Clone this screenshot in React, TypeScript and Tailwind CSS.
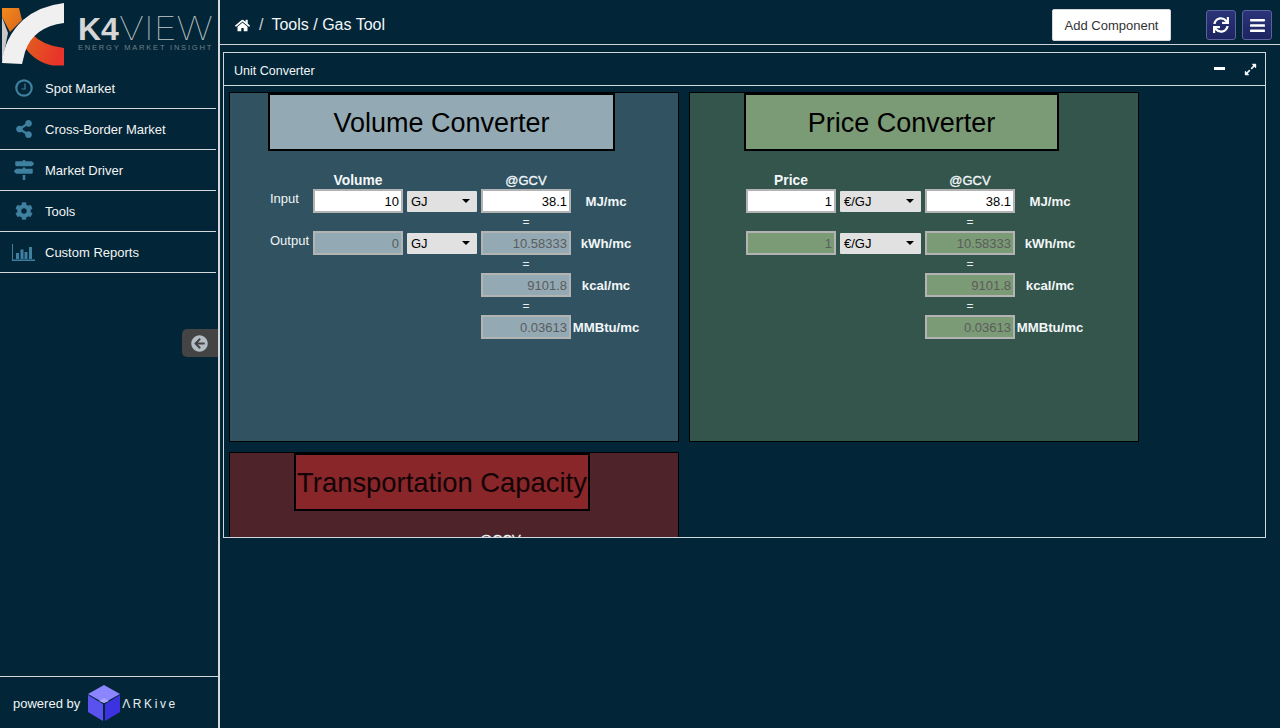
import React from "react";
import { FaHome, FaShareAlt, FaMapSigns, FaCog, FaSync, FaBars, FaExpandAlt, FaArrowCircleLeft } from "react-icons/fa";

const font = "font-['Liberation_Sans',Arial,sans-serif]";

function ClockIcon() {
  return (
    <svg width="18" height="18" viewBox="0 0 18 18" fill="none" stroke="#3f7f9f">
      <circle cx="9" cy="9" r="7.7" strokeWidth="2.2" />
      <path d="M10 4.5 V10 H6.5" strokeWidth="1.2" />
    </svg>
  );
}

function BarIcon() {
  return (
    <svg width="24" height="17" viewBox="0 0 24 17" fill="#3f7f9f">
      <rect x="0" y="0" width="1" height="17" />
      <rect x="0" y="15.5" width="23" height="1.5" />
      <rect x="4" y="9" width="3" height="6" />
      <rect x="8.5" y="5.5" width="3" height="9.5" />
      <rect x="12.5" y="8" width="3" height="7" />
      <rect x="17" y="3" width="3" height="12" />
    </svg>
  );
}

const nav = [
  { label: "Spot Market", icon: <ClockIcon /> },
  { label: "Cross-Border Market", icon: <FaShareAlt size={18} className="text-[#3f7f9f]" /> },
  { label: "Market Driver", icon: <FaMapSigns size={20} className="text-[#3f7f9f]" /> },
  { label: "Tools", icon: <FaCog size={18} className="text-[#3f7f9f]" /> },
  { label: "Custom Reports", icon: <BarIcon /> },
];

function Logo() {
  return (
    <div className="h-[68px] flex items-start">
      <svg width="64" height="66" viewBox="0 0 64 66" className="shrink-0 ml-[1px]">
        <defs>
          <linearGradient id="o1" x1="0" y1="0" x2="1" y2="1">
            <stop offset="0" stopColor="#f28a1c" />
            <stop offset="1" stopColor="#d9641c" />
          </linearGradient>
          <linearGradient id="o2" x1="0" y1="0" x2="1" y2="0.3">
            <stop offset="0" stopColor="#e0641e" />
            <stop offset="1" stopColor="#e8342a" />
          </linearGradient>
        </defs>
        <path d="M1 17 L7 33 L1 63 Z" fill="#c9c9c9" />
        <path d="M1 8 L18 8 L21 20 L9 32 L1 17 Z" fill="url(#o1)" />
        <path d="M30 33 Q42 46 63 48 V65.5 H52 Q32 62 22 44 Z" fill="url(#o2)" />
        <path d="M63 3 V23 Q32 27 24 52 L21 64 L1 63 Q3 38 22 20 Q38 6 63 3 Z" fill="#f0f0f0" />
      </svg>
      <div className="ml-[13px] mt-[16px] flex flex-col">
        <div className="text-[32px] leading-[26px] h-[26px] text-[#d6d6d6] whitespace-nowrap">
          <span className="font-bold">K4</span>
          <span className="inline-block origin-left scale-x-[1.22] font-['Inter',sans-serif] font-thin text-[#c4cacc]">VIEW</span>
        </div>
        <div className="text-[7.5px] leading-[9px] mt-[1px] tracking-[1.8px] text-[#6f7f87] whitespace-nowrap">ENERGY MARKET INSIGHT</div>
      </div>
    </div>
  );
}

function Sidebar() {
  return (
    <aside className="w-[220px] shrink-0 h-full flex flex-col border-r-2 border-[#d4d8da] relative">
      <Logo />
      <nav className="mr-[2px]">
        {nav.map((n) => (
          <div key={n.label} className="h-[41px] flex items-center border-b border-[#d4d8da] text-[#f4f4f4] text-[13px]">
            <span className="w-[45px] pl-[12px] pr-[9px] shrink-0 flex justify-center">{n.icon}</span>
            <span className="pt-[2px]">{n.label}</span>
          </div>
        ))}
      </nav>
      <div className="absolute right-0 top-[329px] w-[36px] h-[28px] bg-[#444444] rounded-l-[5px] flex items-center pl-[9px]">
        <FaArrowCircleLeft size={17} className="text-[#b4bcc4]" />
      </div>
      <div className="mt-auto h-[52px] border-t border-[#d4d8da] flex items-center pl-[13px] text-[13px] text-[#f0f4f6]">
        <span className="pt-[2px]">powered by</span>
        <svg width="34" height="38" viewBox="0 0 34 38" className="ml-[7px] mt-[1px] shrink-0">
          <path d="M17 1 L33 10 L17 19 L1 10 Z" fill="#8b85ff" />
          <path d="M1 11 L16 20 L16 37 L1 28 Z" fill="#5a52ee" />
          <path d="M33 11 L18 20 L18 37 L33 28 Z" fill="#3d32e0" />
          <path d="M17 14 L22 17 L17 19 L12 17 Z" fill="#a9a5ff" />
        </svg>
        <span className="ml-[1px] mt-[3px] text-[12px] tracking-[2.6px] text-[#e8eef2] whitespace-nowrap">ΛRKive</span>
      </div>
    </aside>
  );
}

function Field({ value, on, tone }: { value: string; on?: boolean; tone: string }) {
  return (
    <div className={`h-[24px] w-[90px] shrink-0 border-2 border-[#b3b3b3] flex items-center justify-end pr-[2px] pt-[1px] text-[13px] ${on ? "bg-white text-black" : `${tone} text-[#5c5c5c]`}`}>
      {value}
    </div>
  );
}

function Sel({ value, w }: { value: string; w: string }) {
  return (
    <div className={`h-[21px] ${w} shrink-0 bg-[#e1e1e1] rounded-[1px] flex items-center justify-between pl-[4px] pr-[7px] text-[13px] text-black`}>
      <span className="pt-[1px]">{value}</span>
      <span className="w-0 h-0 border-x-[4px] border-x-transparent border-t-[4px] border-t-black" />
    </div>
  );
}

function Unit({ children }: { children: React.ReactNode }) {
  return <div className="w-[70px] shrink-0 pt-[2px] font-bold text-[13.2px] text-[#f2f6f8] whitespace-nowrap flex justify-center">{children}</div>;
}

function Eq() {
  return <div className="w-[90px] h-[18px] text-center text-[12px] leading-[18px] text-[#e8eef0]">=</div>;
}

function Converter({ head, unit, unitW, spacer, tone, leftLabels, pad }: { head: string; unit: string; unitW: string; spacer: string; tone: string; leftLabels: boolean; pad: string }) {
  return (
    <div className={`flex flex-col mt-[21px] ${pad}`}>
      <div className="flex h-[17px] items-center pt-[2px] font-bold text-[13.8px] text-[#f4f8fa]">
        <div className={`${leftLabels ? "w-[43px]" : "w-0"}`} />
        <div className="w-[90px] text-center">{head}</div>
        <div className={`${unitW} mx-[4px]`} />
        <div className="w-[90px] pb-[2px] text-center font-normal text-[13px] [-webkit-text-stroke:0.3px_#f4f8fa]">@GCV</div>
      </div>
      <div className="flex items-center h-[24px]">
        {leftLabels && <div className="w-[43px] text-[13px] text-[#f0f4f6] pb-[5px]">Input</div>}
        <Field value={head === "Volume" ? "10" : "1"} on tone={tone} />
        <div className="mx-[4px]"><Sel value={unit} w={unitW} /></div>
        <Field value="38.1" on tone={tone} />
        <Unit>MJ/mc</Unit>
      </div>
      <div className="flex h-[18px]">
        <div className={spacer} />
        <Eq />
      </div>
      <div className="flex items-center h-[24px]">
        {leftLabels && <div className="w-[43px] text-[13px] text-[#f0f4f6] pb-[5px] whitespace-nowrap">Output</div>}
        <Field value={head === "Volume" ? "0" : "1"} tone={tone} />
        <div className="mx-[4px]"><Sel value={unit} w={unitW} /></div>
        <Field value="10.58333" tone={tone} />
        <Unit>kWh/mc</Unit>
      </div>
      {[["9101.8", "kcal/mc"], ["0.03613", "MMBtu/mc"]].map(([v, u]) => (
        <React.Fragment key={u}>
          <div className="flex h-[18px]">
            <div className={spacer} />
            <Eq />
          </div>
          <div className="flex items-center h-[24px]">
            <div className={spacer} />
            <Field value={v} tone={tone} />
            <Unit>{u}</Unit>
          </div>
        </React.Fragment>
      ))}
    </div>
  );
}

export default function App() {
  return (
    <div className={`w-[1280px] h-[728px] overflow-hidden bg-[#022637] flex ${font}`}>
      <Sidebar />
      <main className="flex-1 min-w-0 flex flex-col">
        <header className="h-[45px] shrink-0 border-b border-[#cfd4d6] flex items-center pt-[6px] pl-[15px] pr-[8px] text-white">
          <FaHome size={15} />
          <span className="ml-[9px] text-[16px] text-[#d0d4d6]">/</span>
          <span className="ml-[8px] text-[16px] text-[#f2f6f8]">Tools / Gas Tool</span>
          <button className="ml-auto w-[119px] h-[32px] pt-[2px] bg-white rounded-[2px] border border-[#d8d8d8] text-[13px] text-[#333]">Add Component</button>
          <button className="ml-[35px] w-[30px] h-[30px] rounded-[3px] border border-[#5a62a0] bg-gradient-to-b from-[#2a3478] to-[#1d2460] flex items-center justify-center">
            <FaSync size={16} />
          </button>
          <button className="ml-[6px] w-[30px] h-[30px] rounded-[3px] border border-[#5a62a0] bg-gradient-to-b from-[#2a3478] to-[#1d2460] flex items-center justify-center">
            <FaBars size={17} />
          </button>
        </header>

        <section className="ml-[3px] mr-[14px] mt-[7px] h-[486px] border border-[#cfd8da] flex flex-col overflow-hidden">
          <div className="h-[33px] shrink-0 border-b border-[#cfd8da] flex items-center pl-[10px] text-[12.5px] text-[#f2f6f8]">
            <span className="pt-[4px]">Unit Converter</span>
            <span className="ml-auto mr-[19px] mb-[2px] w-[11px] h-[3px] bg-white" />
            <FaExpandAlt size={13} className="mr-[8px]" />
          </div>
          <div className="pl-[5px] pt-[6px] grid grid-cols-[450px_450px] gap-[10px] content-start flex-1 overflow-hidden">
            <div className="h-[350px] bg-[#315361] border border-black flex flex-col">
              <div className="ml-[38px] w-[347px] h-[58px] pt-[3px] bg-[#93a9b4] border-2 border-black text-black text-[27px] flex items-center justify-center">Volume Converter</div>
              <Converter head="Volume" unit="GJ" unitW="w-[70px]" spacer="w-[211px] shrink-0" tone="bg-[#93a9b4]" leftLabels pad="pl-[40px]" />
            </div>
            <div className="h-[350px] bg-[#33554b] border border-black flex flex-col">
              <div className="ml-[54px] w-[315px] h-[58px] pt-[3px] bg-[#7b9a76] border-2 border-black text-black text-[27px] flex items-center justify-center">Price Converter</div>
              <Converter head="Price" unit="€/GJ" unitW="w-[81px]" spacer="w-[179px] shrink-0" tone="bg-[#7b9a76]" leftLabels={false} pad="pl-[56px]" />
            </div>
            <div className="h-[350px] bg-[#4e232a] border border-black flex flex-col">
              <div className="ml-[64px] w-[296px] h-[58px] pt-[1px] bg-[#882629] border-2 border-black text-[#120406] text-[27.4px] flex items-center justify-center whitespace-nowrap">Transportation Capacity</div>
              <div className="mt-[19px] ml-[225px] w-[90px] text-center text-[13px] text-[#f4f8fa] [-webkit-text-stroke:0.3px_#f4f8fa]">@GCV</div>
            </div>
          </div>
        </section>
      </main>
    </div>
  );
}
